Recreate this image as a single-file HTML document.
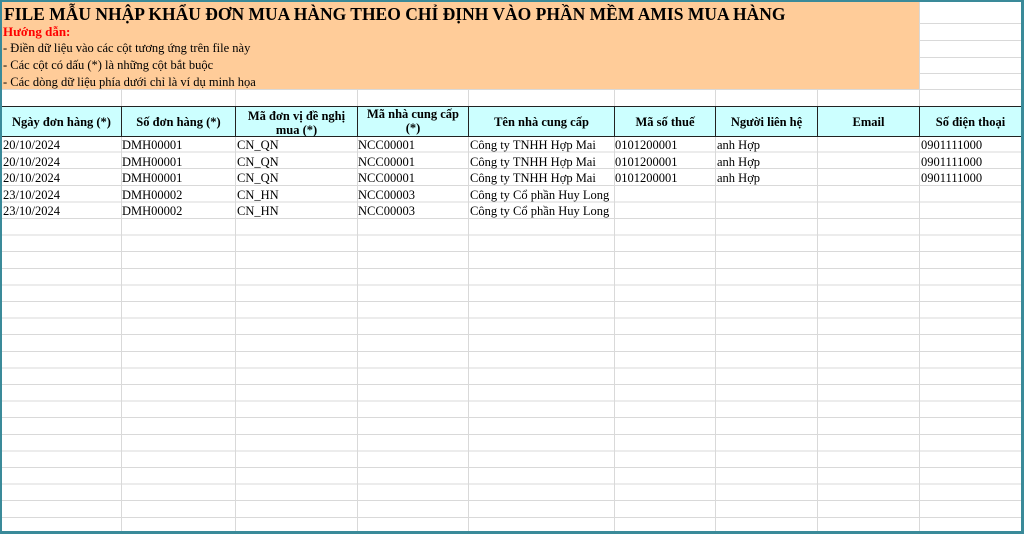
<!DOCTYPE html>
<html><head><meta charset="utf-8"><style>
*{margin:0;padding:0;box-sizing:border-box}
body{width:1024px;height:534px;position:relative;overflow:hidden;background:#fff;font-family:"Liberation Serif",serif;color:#000}
.a{position:absolute}
.v{position:absolute;width:1px;background:#d9d9d9}
.t{position:absolute;font-size:12.5px;white-space:nowrap;line-height:16.6px}
.h{position:absolute;font-size:12.5px;font-weight:bold;text-align:center;line-height:14px;display:flex;align-items:center;justify-content:center;top:108px;height:28px;overflow:hidden}
</style></head><body>
<div class="a" style="left:2px;top:136px;width:1020px;height:396px;background:repeating-linear-gradient(to bottom,transparent 0,transparent 15.6px,#d9d9d9 15.6px,#d9d9d9 16.6px)"></div>
<div class="v" style="left:121px;top:89px;height:445px"></div>
<div class="v" style="left:235px;top:89px;height:445px"></div>
<div class="v" style="left:357px;top:89px;height:445px"></div>
<div class="v" style="left:468px;top:89px;height:445px"></div>
<div class="v" style="left:614px;top:89px;height:445px"></div>
<div class="v" style="left:715px;top:89px;height:445px"></div>
<div class="v" style="left:817px;top:89px;height:445px"></div>
<div class="v" style="left:919px;top:0;height:534px"></div>
<div class="a" style="left:919px;top:23px;width:103px;height:1px;background:#d9d9d9"></div>
<div class="a" style="left:919px;top:40px;width:103px;height:1px;background:#d9d9d9"></div>
<div class="a" style="left:919px;top:57px;width:103px;height:1px;background:#d9d9d9"></div>
<div class="a" style="left:919px;top:73px;width:103px;height:1px;background:#d9d9d9"></div>
<div class="a" style="left:2px;top:89px;width:1020px;height:1px;background:#d9d9d9"></div>
<div class="a" style="left:2px;top:2px;width:917px;height:87px;background:#ffcc99"></div>
<div class="a" style="left:4px;top:4px;font-size:17.5px;font-weight:bold;white-space:nowrap;line-height:20px">FILE MẪU NHẬP KHẨU ĐƠN MUA HÀNG THEO CHỈ ĐỊNH VÀO PHẦN MỀM AMIS MUA HÀNG</div>
<div class="a" style="left:3px;top:24px;font-size:13px;font-weight:bold;color:#ff0000;line-height:16px">Hướng dẫn:</div>
<div class="t" style="left:3px;top:40px">- Điền dữ liệu vào các cột tương ứng trên file này</div>
<div class="t" style="left:3px;top:57px">- Các cột có dấu (*) là những cột bắt buộc</div>
<div class="t" style="left:3px;top:74px">- Các dòng dữ liệu phía dưới chỉ là ví dụ minh họa</div>
<div class="a" style="left:2px;top:106px;width:1020px;height:31px;background:#ccffff;border-top:1px solid #222;border-bottom:1px solid #222"></div>
<div class="a" style="left:121px;top:106px;width:1px;height:31px;background:#222"></div>
<div class="a" style="left:235px;top:106px;width:1px;height:31px;background:#222"></div>
<div class="a" style="left:357px;top:106px;width:1px;height:31px;background:#222"></div>
<div class="a" style="left:468px;top:106px;width:1px;height:31px;background:#222"></div>
<div class="a" style="left:614px;top:106px;width:1px;height:31px;background:#222"></div>
<div class="a" style="left:715px;top:106px;width:1px;height:31px;background:#222"></div>
<div class="a" style="left:817px;top:106px;width:1px;height:31px;background:#222"></div>
<div class="a" style="left:919px;top:106px;width:1px;height:31px;background:#222"></div>
<div class="h" style="left:2px;width:119px">Ngày đơn hàng (*)</div>
<div class="h" style="left:122px;width:113px">Số đơn hàng (*)</div>
<div class="h" style="left:236px;width:121px;top:109px">Mã đơn vị đề nghị<br>mua (*)</div>
<div class="h" style="left:358px;width:110px;top:107px;height:29px;align-items:flex-start">Mã nhà cung cấp<br>(*)</div>
<div class="h" style="left:469px;width:145px">Tên nhà cung cấp</div>
<div class="h" style="left:615px;width:100px">Mã số thuế</div>
<div class="h" style="left:716px;width:101px">Người liên hệ</div>
<div class="h" style="left:818px;width:101px">Email</div>
<div class="h" style="left:920px;width:101px">Số điện thoại</div>
<div class="t" style="left:3px;top:137px">20/10/2024<br>20/10/2024<br>20/10/2024<br>23/10/2024<br>23/10/2024</div>
<div class="t" style="left:122px;top:137px">DMH00001<br>DMH00001<br>DMH00001<br>DMH00002<br>DMH00002</div>
<div class="t" style="left:237px;top:137px">CN_QN<br>CN_QN<br>CN_QN<br>CN_HN<br>CN_HN</div>
<div class="t" style="left:358px;top:137px">NCC00001<br>NCC00001<br>NCC00001<br>NCC00003<br>NCC00003</div>
<div class="t" style="left:470px;top:137px">Công ty TNHH Hợp Mai<br>Công ty TNHH Hợp Mai<br>Công ty TNHH Hợp Mai<br>Công ty Cổ phần Huy Long<br>Công ty Cổ phần Huy Long</div>
<div class="t" style="left:615px;top:137px">0101200001<br>0101200001<br>0101200001</div>
<div class="t" style="left:717px;top:137px">anh Hợp<br>anh Hợp<br>anh Hợp</div>
<div class="t" style="left:921px;top:137px">0901111000<br>0901111000<br>0901111000</div>
<div class="a" style="left:0;top:0;width:1024px;height:534px;border:2px solid #3a8a99;border-right-width:3px;border-bottom-width:3px"></div>
</body></html>
